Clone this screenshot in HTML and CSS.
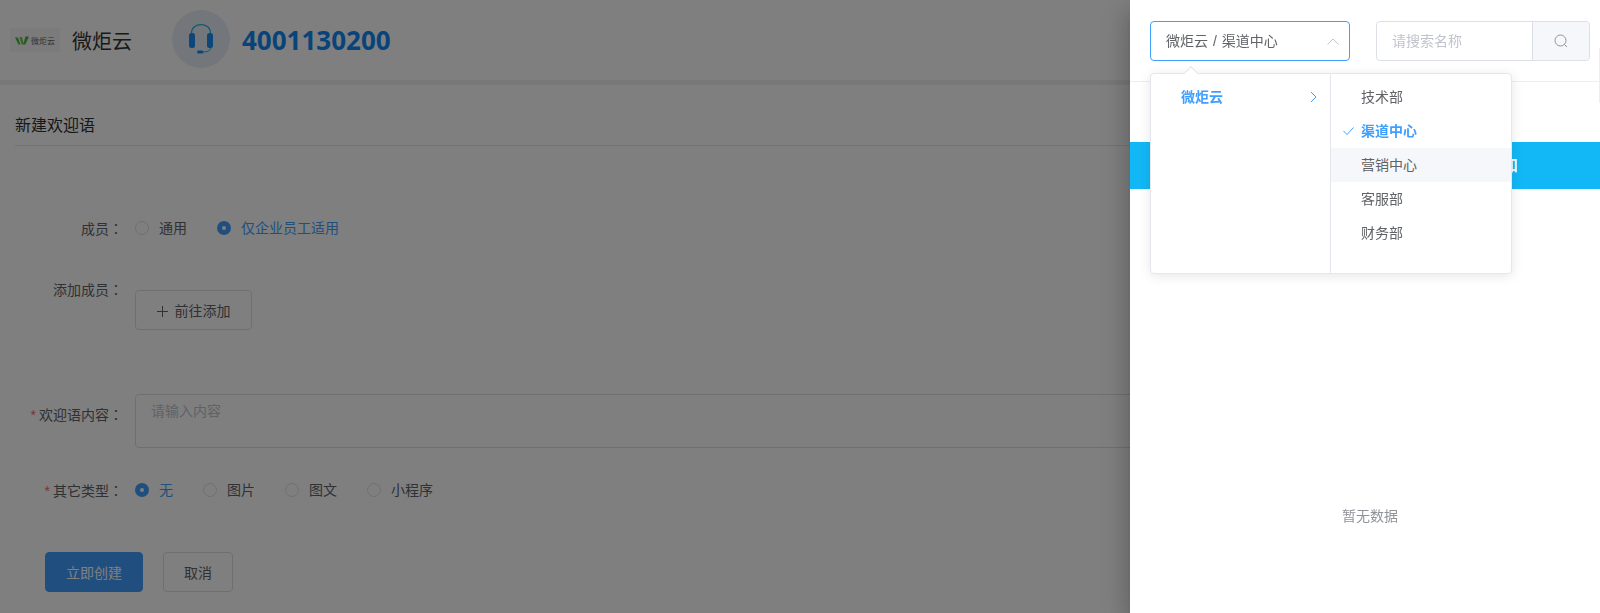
FILE: index.html
```html
<!DOCTYPE html>
<html lang="zh-CN">
<head>
    <meta charset="UTF-8">
    <meta name="viewport" content="width=device-width, initial-scale=1.0">
    <title>新建欢迎语</title>
    <link rel="stylesheet" href="styles.css">
</head>
<body>
    <div class="page">
        <header class="top-bar">
            <div class="logo">
                <svg class="logo-mark" width="14" height="9" viewBox="0 0 14 9">
                    <path d="M0 1.5 L3 1.5 L5.5 8.5 L3.5 8.5 Z" fill="#4cb648"/>
                    <path d="M4.5 1 L7 1 L8.8 8.5 L6.6 8.5 Z" fill="#6cc644"/>
                    <path d="M8.2 8.5 L10.4 0.5 L14 0.5 L10.4 8.5 Z" fill="#4cb648"/>
                </svg>
                <span class="logo-text">微炬云</span>
            </div>
            <span class="brand">微炬云</span>
            <div class="hotline-icon">
                <svg width="24" height="30" viewBox="0 0 24 30">
                    <path d="M2.500 10 V9 C2.500 3.500 7 0.600 12 0.600 C17 0.600 21.500 3.500 21.500 9 V10" fill="none" stroke="#25b5d8" stroke-width="1.200"/>
                    <rect x="0" y="9" width="6" height="15" rx="2.500" fill="#1a8cf0"/>
                    <rect x="18" y="9" width="6" height="15" rx="2.500" fill="#1a8cf0"/>
                    <path d="M22 24 C21 27 18 28 14 28" fill="none" stroke="#25b5d8" stroke-width="1"/>
                    <rect x="8" y="26.500" width="6.500" height="3" rx="1.500" fill="#1a8cf0"/>
                </svg>
            </div>
            <span class="hotline">4001130200</span>
        </header>

        <main class="content">
            <h2 class="page-title">新建欢迎语</h2>

            <div class="form-row row-member">
                <label class="form-label">成员<span class="colon" lang="zh-TW">：</span></label>
                <div class="radio-group">
                    <span class="radio radio-first"><i class="dot"></i>通用</span>
                    <span class="radio checked"><i class="dot"></i>仅企业员工适用</span>
                </div>
            </div>

            <div class="form-row row-add">
                <label class="form-label">添加成员<span class="colon" lang="zh-TW">：</span></label>
                <button class="btn btn-add">
                    <svg class="plus" width="11" height="11" viewBox="0 0 11 11"><path d="M5.500 0 V11 M0 5.500 H11" stroke="#606266" stroke-width="1"/></svg>前往添加
                </button>
            </div>

            <div class="form-row row-text">
                <label class="form-label"><em>*</em>欢迎语内容<span class="colon" lang="zh-TW">：</span></label>
                <div class="fake-textarea">请输入内容</div>
            </div>

            <div class="form-row row-type">
                <label class="form-label"><em>*</em>其它类型<span class="colon" lang="zh-TW">：</span></label>
                <div class="radio-group">
                    <span class="radio checked w-68"><i class="dot"></i>无</span>
                    <span class="radio w-82"><i class="dot"></i>图片</span>
                    <span class="radio w-82"><i class="dot"></i>图文</span>
                    <span class="radio"><i class="dot"></i>小程序</span>
                </div>
            </div>

            <div class="form-actions">
                <button class="btn btn-primary">立即创建</button>
                <button class="btn btn-cancel">取消</button>
            </div>
        </main>
    </div>

    <div class="overlay"></div>

    <aside class="drawer">
        <div class="drawer-head">
            <div class="select-box">
                <span>微炬云 / 渠道中心</span>
                <svg width="12" height="7" viewBox="0 0 12 7"><path d="M0.500 6.500 L6 1 L11.500 6.500" fill="none" stroke="#c0c4cc" stroke-width="1"/></svg>
            </div>
            <div class="search-box">
                <span class="search-input">请搜索名称</span>
                <span class="search-btn">
                    <svg width="14" height="14" viewBox="0 0 14 14"><circle cx="6.500" cy="6.500" r="5.500" fill="none" stroke="#909399" stroke-width="1"/><path d="M10.500 10.500 L13 13" stroke="#909399" stroke-width="1"/></svg>
                </span>
            </div>
        </div>
        <div class="band">添加</div>
        <div class="empty">暂无数据</div>
        <span class="edge-line"></span>

        <div class="cascader">
            <span class="cascader-arrow"></span>
            <ul class="cascader-col col-left">
                <li class="active">微炬云
                    <svg class="chevron" width="7" height="12" viewBox="0 0 7 12"><path d="M1 1 L6 6 L1 11" fill="none" stroke="#409eff" stroke-width="1"/></svg>
                </li>
            </ul>
            <ul class="cascader-col col-right">
                <li>技术部</li>
                <li class="active">
                    <svg class="check" width="11" height="8" viewBox="0 0 11 8"><path d="M0.500 4 L4 7.500 L10.500 0.500" fill="none" stroke="#409eff" stroke-width="1"/></svg>
                    渠道中心
                </li>
                <li class="hover">营销中心</li>
                <li>客服部</li>
                <li>财务部</li>
            </ul>
        </div>
    </aside>
</body>
</html>
```

FILE: styles.css
```css
* {
    box-sizing: border-box;
}
html, body {
    height: 100%;
}
body {
    margin: 0;
    overflow: hidden;
    background-color: #fff;
    color: #606266;
    font-family: "Liberation Sans", "Noto Sans CJK SC", sans-serif;
    font-size: 14px;
}
ul {
    list-style: none;
    margin: 0;
    padding: 0;
}
.page {
    height: 613px;
    overflow: hidden;
}
.top-bar {
    display: flex;
    align-items: center;
    height: 85px;
    padding: 0 0 2px 10px;
    background-color: #fff;
    border-bottom: 5px solid #f0f0f0;
}
.logo {
    display: flex;
    align-items: center;
    justify-content: center;
    gap: 2px;
    width: 50px;
    height: 24px;
    margin-top: 2px;
    background-color: #f7f7f7;
}
.logo-text {
    font-size: 8px;
    color: #666;
}
.brand {
    margin-left: 12px;
    margin-top: 3px;
    width: 100px;
    font-size: 20px;
    color: #333;
}
.hotline-icon {
    display: flex;
    align-items: center;
    justify-content: center;
    width: 58px;
    height: 58px;
    border-radius: 50%;
    background-color: #e6eff8;
}
.hotline {
    margin-left: 12px;
    margin-top: 2px;
    font-family: "Open Sans", "Liberation Sans", sans-serif;
    font-size: 26px;
    font-weight: bold;
    color: #1088f5;
}
.content {
    padding: 0 0 0 15px;
}
.page-title {
    margin: 0;
    padding-top: 29px;
    height: 61px;
    border-bottom: 1px solid #e6e6e6;
    font-size: 16px;
    font-weight: normal;
    line-height: 24px;
    color: #303133;
}
.form-row {
    display: flex;
}
.form-label {
    width: 108px;
    height: 20px;
    flex-shrink: 0;
    margin-right: 12px;
    text-align: right;
    line-height: 20px;
}
.form-label em {
    margin-right: 3px;
    font-style: normal;
    color: #f56c6c;
}
.colon {
    font-family: "Noto Sans CJK TC", sans-serif;
}
.row-member {
    margin-top: 72px;
}
.row-add {
    margin-top: 41px;
}
.row-text {
    margin-top: 64px;
    align-items: flex-start;
}
.row-text .form-label {
    height: 30px;
    padding-top: 10px;
}
.row-type {
    margin-top: 32px;
}
.radio-group {
    display: flex;
    height: 20px;
    line-height: 20px;
}
.radio {
    display: flex;
    align-items: center;
}
.radio-first {
    width: 82px;
}
.w-68 {
    width: 68px;
}
.w-82 {
    width: 82px;
}
.dot {
    width: 14px;
    height: 14px;
    margin-right: 10px;
    border: 1px solid #dcdfe6;
    border-radius: 50%;
    background-color: #fff;
}
.radio.checked {
    color: #409eff;
}
.radio.checked .dot {
    border: 5px solid #409eff;
    background-color: #fff;
}
.btn {
    height: 40px;
    border: 1px solid #dcdfe6;
    border-radius: 4px;
    background-color: #fff;
    color: #606266;
    font-family: inherit;
    font-size: 14px;
    padding: 0;
}
.btn-add {
    width: 117px;
    margin-top: 11px;
}
.plus {
    margin-right: 7px;
    vertical-align: -1px;
}
.fake-textarea {
    width: 1100px;
    height: 54px;
    padding: 6px 15px;
    border: 1px solid #dcdfe6;
    border-radius: 4px;
    background-color: #fff;
    color: #c0c4cc;
    line-height: 20px;
}
.form-actions {
    display: flex;
    gap: 20px;
    margin-top: 52px;
    padding-left: 30px;
}
.btn-primary {
    width: 98px;
    border-color: #409eff;
    background-color: #409eff;
    color: #fff;
}
.btn-cancel {
    width: 70px;
}
.overlay {
    position: fixed;
    top: 0;
    left: 0;
    right: 0;
    bottom: 0;
    background-color: rgba(0, 0, 0, 0.5);
}
.drawer {
    position: fixed;
    top: 0;
    right: 0;
    bottom: 0;
    width: 470px;
    background-color: #fff;
    box-shadow: 0 8px 10px -5px rgba(0, 0, 0, 0.2), 0 16px 24px 2px rgba(0, 0, 0, 0.14), 0 6px 30px 5px rgba(0, 0, 0, 0.12);
}
.drawer-head {
    display: flex;
    height: 82px;
    padding: 21px 10px 0 20px;
    border-bottom: 1px solid #ebeef5;
}
.select-box {
    display: flex;
    align-items: center;
    justify-content: space-between;
    width: 200px;
    height: 40px;
    padding: 0 10px 0 15px;
    border: 1px solid #409eff;
    border-radius: 4px;
    line-height: 38px;
    word-spacing: 1px;
}
.search-box {
    display: flex;
    width: 214px;
    height: 40px;
    margin-left: 26px;
    border: 1px solid #dcdfe6;
    border-radius: 4px;
}
.search-input {
    flex: 1;
    padding-left: 15px;
    color: #c0c4cc;
    line-height: 38px;
}
.search-btn {
    display: flex;
    align-items: center;
    justify-content: center;
    width: 57px;
    border-left: 1px solid #dcdfe6;
    background-color: #f5f7fa;
    border-radius: 0 4px 4px 0;
}
.band {
    height: 47px;
    margin-top: 60px;
    padding-right: 82px;
    background-color: #12b7f5;
    color: #fff;
    font-size: 16px;
    font-weight: bold;
    line-height: 47px;
    text-align: right;
}
.empty {
    margin-top: 317px;
    padding-left: 10px;
    color: #909399;
    font-size: 14px;
    line-height: 20px;
    text-align: center;
}
.edge-line {
    position: absolute;
    top: 48px;
    right: 0;
    width: 1px;
    height: 55px;
    background-color: #eeeeee;
}
.cascader {
    position: absolute;
    top: 73px;
    left: 20px;
    display: flex;
    width: 362px;
    height: 201px;
    border: 1px solid #e4e7ed;
    border-radius: 4px;
    background-color: #fff;
    box-shadow: 0 2px 12px 0 rgba(0, 0, 0, 0.1);
}
.cascader-arrow {
    position: absolute;
    top: -6px;
    left: 35px;
    width: 10px;
    height: 10px;
    border-top: 1px solid #e4e7ed;
    border-left: 1px solid #e4e7ed;
    background-color: #fff;
    transform: rotate(45deg);
}
.cascader-col {
    padding: 6px 0;
}
.col-left {
    width: 180px;
    border-right: 1px solid #e4e7ed;
}
.col-right {
    flex: 1;
}
.cascader-col li {
    position: relative;
    height: 34px;
    line-height: 34px;
    padding-left: 30px;
}
.cascader-col li.active {
    color: #409eff;
    font-weight: bold;
}
.cascader-col li.hover {
    background-color: #f5f7fa;
}
.chevron {
    position: absolute;
    top: 11px;
    right: 13px;
}
.check {
    position: absolute;
    top: 13px;
    left: 12px;
}
```
